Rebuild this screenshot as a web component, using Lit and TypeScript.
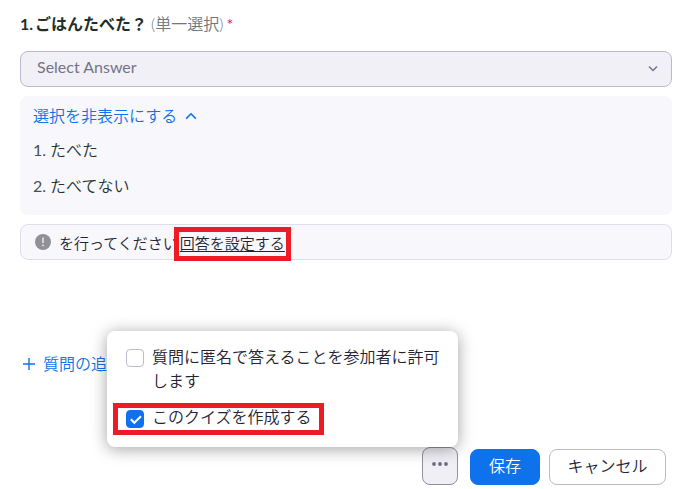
import { LitElement, html, css } from "lit";
import { customElement, state } from "lit/decorators.js";

@customElement("app-root")
export class AppRoot extends LitElement {
  @state() private anonymous = false;
  @state() private quiz = true;

  static styles = css`
    :host {
      display: block;
      box-sizing: border-box;
      padding: 12px 14px 4px 20px;
      background: #fff;
      color: #232333;
      font: 350 16px/24px Lato, "Noto Sans CJK JP", sans-serif;
    }
    *,
    *::before {
      box-sizing: border-box;
    }
    button,
    select {
      font: inherit;
      color: inherit;
      margin: 0;
    }
    .title {
      display: flex;
      margin: 0 0 15px;
      font-size: 16px;
      line-height: 24px;
      font-weight: 700;
      color: #1f2f2a;
    }
    .number {
      margin-right: 2px;
    }
    .kind {
      margin: 0 3px 0 4px;
      font-weight: 350;
      color: #6e7680;
    }
    .required {
      font-weight: 400;
      color: #e8173d;
    }
    .picker {
      position: relative;
    }
    .select {
      display: block;
      width: 100%;
      height: 36px;
      padding: 0 16px 4px;
      appearance: none;
      border: 1px solid #babacc;
      border-radius: 8px;
      background: #f1f0f6;
      color: #747487;
      font-weight: 400;
    }
    .picker-chevron {
      position: absolute;
      top: 14px;
      right: 14px;
      pointer-events: none;
    }
    .options {
      margin-top: 9px;
      padding: 8px 13px 17px;
      border-radius: 8px;
      background: #f7f7fc;
    }
    .toggle,
    .add {
      display: flex;
      align-items: center;
      padding: 0;
      border: 0;
      background: none;
      color: #0e72ed;
      cursor: pointer;
    }
    .toggle {
      gap: 8px;
    }
    .list {
      display: grid;
      gap: 12px;
      margin: 10px 0 0;
      padding: 0;
      list-style: none;
      color: #25332f;
    }
    .list li {
      display: flex;
      gap: 4px;
    }
    .list-number {
      font-weight: 400;
      color: #47524f;
    }
    .notice {
      display: flex;
      align-items: center;
      height: 36px;
      margin-top: 9px;
      padding: 2px 13px 0;
      border: 1px solid #dedee9;
      border-radius: 8px;
      background: #f7f7fc;
      font-size: 15px;
    }
    .notice-icon {
      margin-right: 7px;
    }
    .marked {
      position: relative;
    }
    .marked::before {
      content: "";
      position: absolute;
      border: 5px solid #ed1c24;
      pointer-events: none;
    }
    .marked-link {
      margin-left: 2px;
    }
    .marked-link::before {
      inset: -4px -6px -6px;
    }
    .marked-row::before {
      inset: -2px 0 -6px -13px;
    }
    .link {
      color: inherit;
      text-underline-offset: 2px;
    }
    .add {
      gap: 8px;
      margin-top: 92px;
      padding-left: 3px;
    }
    .actions {
      display: flex;
      justify-content: flex-end;
      align-items: flex-end;
      margin: 71px 6px 0 0;
    }
    .more-wrap {
      position: relative;
      margin-right: 12px;
    }
    .button {
      height: 36px;
      border-radius: 8px;
      padding: 0 18px 2px;
      cursor: pointer;
    }
    .more {
      display: flex;
      align-items: center;
      justify-content: center;
      width: 36px;
      height: 38px;
      padding: 0 0 4px;
      border: 1px solid #909096;
      border-radius: 8px;
      background: #f0eff6;
      cursor: pointer;
    }
    .save {
      margin-right: 9px;
      border: 1px solid #0e72ed;
      background: #0e72ed;
      color: #fff;
    }
    .cancel {
      width: 117px;
      padding-inline: 16px;
      border: 1px solid #babacc;
      background: #fff;
    }
    .menu {
      position: absolute;
      right: 0;
      bottom: 100%;
      display: grid;
      justify-items: start;
      gap: 12px;
      width: 351px;
      padding: 14px 16px 18px 19px;
      border-radius: 8px;
      background: #fff;
      box-shadow: 0 2px 16px rgba(19, 22, 25, 0.4);
    }
    .option {
      display: flex;
      align-items: flex-start;
      gap: 8px;
      cursor: pointer;
    }
    .marked-row {
      padding-right: 12px;
    }
    .check {
      position: relative;
      display: grid;
      flex: none;
    }
    .box {
      width: 18px;
      height: 18px;
      margin: 4px 0 0;
      appearance: none;
      border: 1px solid #babacc;
      border-radius: 4px;
      background: #fff;
    }
    .box:checked {
      margin-top: 5px;
      border-color: #0e72ed;
      background: #0e72ed;
    }
    .tick {
      position: absolute;
      bottom: 0;
      left: 0;
      pointer-events: none;
    }
  `;

  private tick(on: boolean) {
    return on
      ? html`<svg class="tick" width="18" height="18" viewBox="0 0 18 18" fill="none">
          <path d="M4.8 9.3 8.3 12.8 15 6.2" stroke="#fff" stroke-width="2" />
        </svg>`
      : null;
  }

  render() {
    return html`
      <h1 class="title">
        <span class="number">1.</span>
        <span>ごはんたべた？</span>
        <span class="kind">(単一選択)</span>
        <span class="required">*</span>
      </h1>

      <div class="picker">
        <select class="select" aria-label="ごはんたべた？">
          <option>Select Answer</option>
          <option>たべた</option>
          <option>たべてない</option>
        </select>
        <svg class="picker-chevron" width="10" height="8" viewBox="0 0 10 8" fill="none">
          <path d="M1 1.5 5 5.5 9 1.5" stroke="#747487" stroke-width="1.5" />
        </svg>
      </div>

      <section class="options">
        <button class="toggle" type="button" aria-expanded="true">
          選択を非表示にする
          <svg width="12" height="8" viewBox="0 0 12 8" fill="none">
            <path d="M1.2 6.6 6 1.8 10.8 6.6" stroke="#0e72ed" stroke-width="1.6" />
          </svg>
        </button>
        <ol class="list">
          <li><span class="list-number">1.</span><span>たべた</span></li>
          <li><span class="list-number">2.</span><span>たべてない</span></li>
        </ol>
      </section>

      <div class="notice">
        <svg class="notice-icon" width="18" height="18" viewBox="0 0 18 18">
          <circle cx="9" cy="8" r="8" fill="#909096" />
          <path d="M9 3.5v5.5M9 10.5v1.8" stroke="#e4e4ea" stroke-width="1.6" />
        </svg>
        <span>を行ってください</span>
        <span class="marked marked-link"><a class="link" href="#answers">回答を設定する</a></span>
      </div>

      <button class="add" type="button">
        <svg width="12" height="12" viewBox="0 0 12 12">
          <path d="M6 0v12M0 6h12" stroke="#0e72ed" stroke-width="1.4" />
        </svg>
        質問の追加
      </button>

      <div class="actions">
        <div class="more-wrap">
          <button class="more" type="button" aria-label="その他" aria-expanded="true">
            <svg width="18" height="4" viewBox="0 0 18 4" fill="#6e6e82">
              <circle cx="3" cy="2" r="1.9" />
              <circle cx="9" cy="2" r="1.9" />
              <circle cx="15" cy="2" r="1.9" />
            </svg>
          </button>
          <div class="menu">
            <label class="option">
              <span class="check">
                <input class="box" type="checkbox" .checked=${this.anonymous}
                  @change=${(e: Event) => (this.anonymous = (e.target as HTMLInputElement).checked)} />
                ${this.tick(this.anonymous)}
              </span>
              <span>質問に匿名で答えることを参加者に許可します</span>
            </label>
            <label class="option marked marked-row">
              <span class="check">
                <input class="box" type="checkbox" .checked=${this.quiz}
                  @change=${(e: Event) => (this.quiz = (e.target as HTMLInputElement).checked)} />
                ${this.tick(this.quiz)}
              </span>
              <span>このクイズを作成する</span>
            </label>
          </div>
        </div>
        <button class="button save" type="button">保存</button>
        <button class="button cancel" type="button">キャンセル</button>
      </div>
    `;
  }
}
